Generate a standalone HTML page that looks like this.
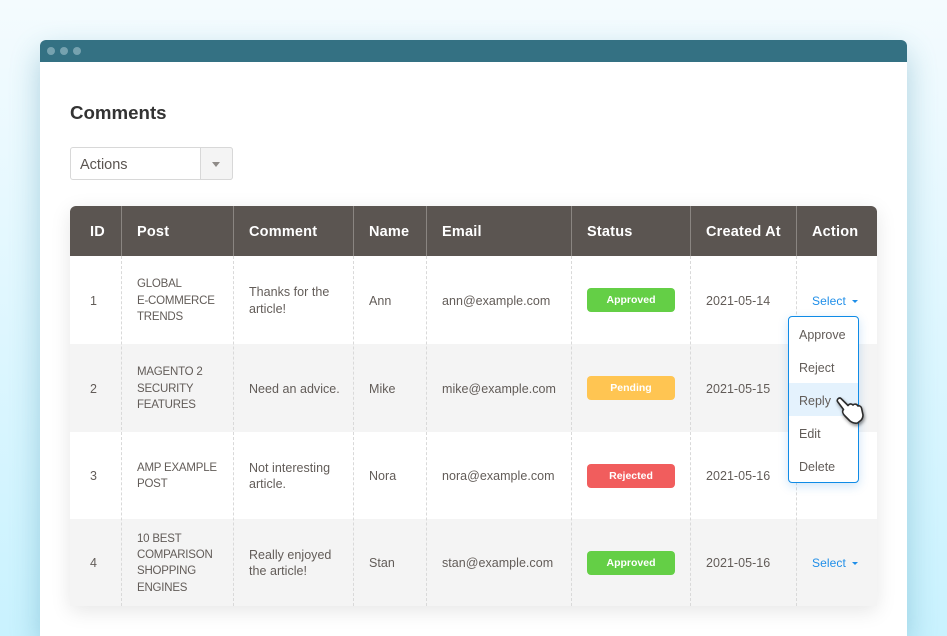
<!DOCTYPE html>
<html style="width:947px;height:636px;overflow:hidden"><head><meta charset="utf-8">
<style>
html,body{margin:0;padding:0}
body{width:947px;height:636px;overflow:hidden;position:relative;font-family:"Liberation Sans",sans-serif;color:#5b5551}
#p{position:absolute;left:0;top:0;width:947px;height:636px;overflow:hidden;background:linear-gradient(180deg,#f4fbfe 0%,#c9f2fe 100%)}
.a{position:absolute}
.t{position:absolute;white-space:nowrap;font-size:12.5px;line-height:16px;letter-spacing:.03px;color:#625c58}
.u{position:absolute;white-space:nowrap;font-size:11.5px;line-height:16px;letter-spacing:-.22px;color:#625c58}
.h{position:absolute;white-space:nowrap;font-size:14.5px;line-height:18px;top:223px;font-weight:bold;color:#fff;letter-spacing:.2px}
.dv{position:absolute;width:1px;top:206px;height:50px;background:#8a8581}
.ds{position:absolute;width:0;top:256px;height:350px;border-left:1px dashed #d9d9d9}
.b{position:absolute;left:587px;width:88px;height:24px;border-radius:4px;color:#fff;font-size:10.5px;font-weight:bold;line-height:25px;text-align:center}
.s{position:absolute;left:812px;font-size:12px;line-height:16px;color:#1f8ee8;letter-spacing:.1px;white-space:nowrap}
.c{position:absolute;left:852px;width:0;height:0;border-left:3.5px solid transparent;border-right:3.5px solid transparent;border-top:3.5px solid #1f8ee8}
.m{position:absolute;font-size:12.5px;line-height:16px;color:#625c58;white-space:nowrap}
</style></head><body><div id="p">
<div class="a" style="left:40px;top:40px;width:867px;height:596px;background:#fff;border-radius:6px 6px 0 0;box-shadow:0 12px 30px rgba(40,130,160,.33)"></div>
<div class="a" style="left:40px;top:40px;width:867px;height:22px;background:#347183;border-radius:6px 6px 0 0"></div>
<div class="a" style="left:47px;top:47px;width:8px;height:8px;border-radius:50%;background:#76a2af"></div>
<div class="a" style="left:60px;top:47px;width:8px;height:8px;border-radius:50%;background:#76a2af"></div>
<div class="a" style="left:73px;top:47px;width:8px;height:8px;border-radius:50%;background:#76a2af"></div>

<div class="a" style="left:70px;top:102px;font-size:18.7px;line-height:22px;font-weight:bold;color:#333">Comments</div>

<div class="a" style="left:70px;top:147px;width:161px;height:31px;border:1px solid #d8d8d8;border-radius:3px;background:#fff"></div>
<div class="a" style="left:200px;top:147px;width:31px;height:31px;border:1px solid #d8d8d8;border-radius:0 3px 3px 0;background:#f4f4f4"></div>
<div class="a" style="left:212px;top:162px;width:0;height:0;border-left:4px solid transparent;border-right:4px solid transparent;border-top:5px solid #8f8b88"></div>
<div class="a" style="left:80px;top:156px;font-size:14.5px;line-height:18px;color:#5b5551">Actions</div>

<div class="a" style="left:70px;top:206px;width:807px;height:400px;border-radius:6px 6px 0 0;background:#fff;box-shadow:0 5px 20px rgba(0,0,0,.1)"></div>
<div class="a" style="left:70px;top:206px;width:807px;height:50px;background:#5b5551;border-radius:6px 6px 0 0"></div>
<div class="a" style="left:70px;top:344px;width:807px;height:88px;background:#f4f4f4"></div>
<div class="a" style="left:70px;top:519px;width:807px;height:87px;background:#f4f4f4"></div>

<div class="dv" style="left:121px"></div><div class="dv" style="left:233px"></div><div class="dv" style="left:353px"></div><div class="dv" style="left:426px"></div><div class="dv" style="left:571px"></div><div class="dv" style="left:690px"></div><div class="dv" style="left:796px"></div>
<div class="ds" style="left:121px"></div><div class="ds" style="left:233px"></div><div class="ds" style="left:353px"></div><div class="ds" style="left:426px"></div><div class="ds" style="left:571px"></div><div class="ds" style="left:690px"></div><div class="ds" style="left:796px"></div>

<div class="h" style="left:90px">ID</div>
<div class="h" style="left:137px">Post</div>
<div class="h" style="left:249px">Comment</div>
<div class="h" style="left:369px">Name</div>
<div class="h" style="left:442px">Email</div>
<div class="h" style="left:587px">Status</div>
<div class="h" style="left:706px">Created At</div>
<div class="h" style="left:812px">Action</div>

<div class="t" style="left:90px;top:293px">1</div>
<div class="u" style="left:137px;top:276px">GLOBAL</div>
<div class="u" style="left:137px;top:293px">E-COMMERCE</div>
<div class="u" style="left:137px;top:309px">TRENDS</div>
<div class="t" style="left:249px;top:284px">Thanks for the</div>
<div class="t" style="left:249px;top:301px">article!</div>
<div class="t" style="left:369px;top:293px">Ann</div>
<div class="t" style="left:442px;top:293px">ann@example.com</div>
<div class="b" style="top:288px;background:#64cf46">Approved</div>
<div class="t" style="left:706px;top:293px">2021-05-14</div>
<div class="s" style="top:293px">Select</div><div class="c" style="top:300px"></div>

<div class="t" style="left:90px;top:381px">2</div>
<div class="u" style="left:137px;top:364px">MAGENTO 2</div>
<div class="u" style="left:137px;top:381px">SECURITY</div>
<div class="u" style="left:137px;top:397px">FEATURES</div>
<div class="t" style="left:249px;top:381px">Need an advice.</div>
<div class="t" style="left:369px;top:381px">Mike</div>
<div class="t" style="left:442px;top:381px">mike@example.com</div>
<div class="b" style="top:376px;background:#ffc552">Pending</div>
<div class="t" style="left:706px;top:381px">2021-05-15</div>

<div class="t" style="left:90px;top:468px">3</div>
<div class="u" style="left:137px;top:460px">AMP EXAMPLE</div>
<div class="u" style="left:137px;top:476px">POST</div>
<div class="t" style="left:249px;top:460px">Not interesting</div>
<div class="t" style="left:249px;top:476px">article.</div>
<div class="t" style="left:369px;top:468px">Nora</div>
<div class="t" style="left:442px;top:468px">nora@example.com</div>
<div class="b" style="top:464px;background:#f15d5d">Rejected</div>
<div class="t" style="left:706px;top:468px">2021-05-16</div>

<div class="t" style="left:90px;top:555px">4</div>
<div class="u" style="left:137px;top:531px">10 BEST</div>
<div class="u" style="left:137px;top:547px">COMPARISON</div>
<div class="u" style="left:137px;top:563px">SHOPPING</div>
<div class="u" style="left:137px;top:580px">ENGINES</div>
<div class="t" style="left:249px;top:547px">Really enjoyed</div>
<div class="t" style="left:249px;top:563px">the article!</div>
<div class="t" style="left:369px;top:555px">Stan</div>
<div class="t" style="left:442px;top:555px">stan@example.com</div>
<div class="b" style="top:551px;background:#64cf46">Approved</div>
<div class="t" style="left:706px;top:555px">2021-05-16</div>
<div class="s" style="top:555px">Select</div><div class="c" style="top:562px"></div>

<div class="a" style="left:788px;top:316px;width:69px;height:165px;border:1px solid #0f8be6;border-radius:4px;background:#fff;box-shadow:0 3px 10px rgba(30,130,220,.22)">
<div class="a" style="left:0;top:66px;width:69px;height:33px;background:#e4f2fd"></div>
<div class="m" style="left:10px;top:10px">Approve</div>
<div class="m" style="left:10px;top:43px">Reject</div>
<div class="m" style="left:10px;top:76px">Reply</div>
<div class="m" style="left:10px;top:109px">Edit</div>
<div class="m" style="left:10px;top:142px">Delete</div>
</div>
<svg class="a" style="left:830px;top:390px" width="40" height="40" viewBox="0 0 40 40">
<path d="M7.500 11.500C6.500 9.500 9 7 11 8.500L18 15.500C19.500 13.500 21.500 13.500 23 15C24.500 13.500 27 14 28 16C29.500 15.500 31 16.500 31.500 18L33 25C33 28 31.500 30 30 31L27.500 33C25 33.500 22 32.500 20 31L15 26C12.500 23.500 12 21 13.500 19.500Z" fill="#fff" stroke="#2b2b2b" stroke-width="1.600" stroke-linejoin="round" style="filter:drop-shadow(1px 2px 1.500px rgba(0,0,0,.45))"/>
</svg>
</div></body></html>
